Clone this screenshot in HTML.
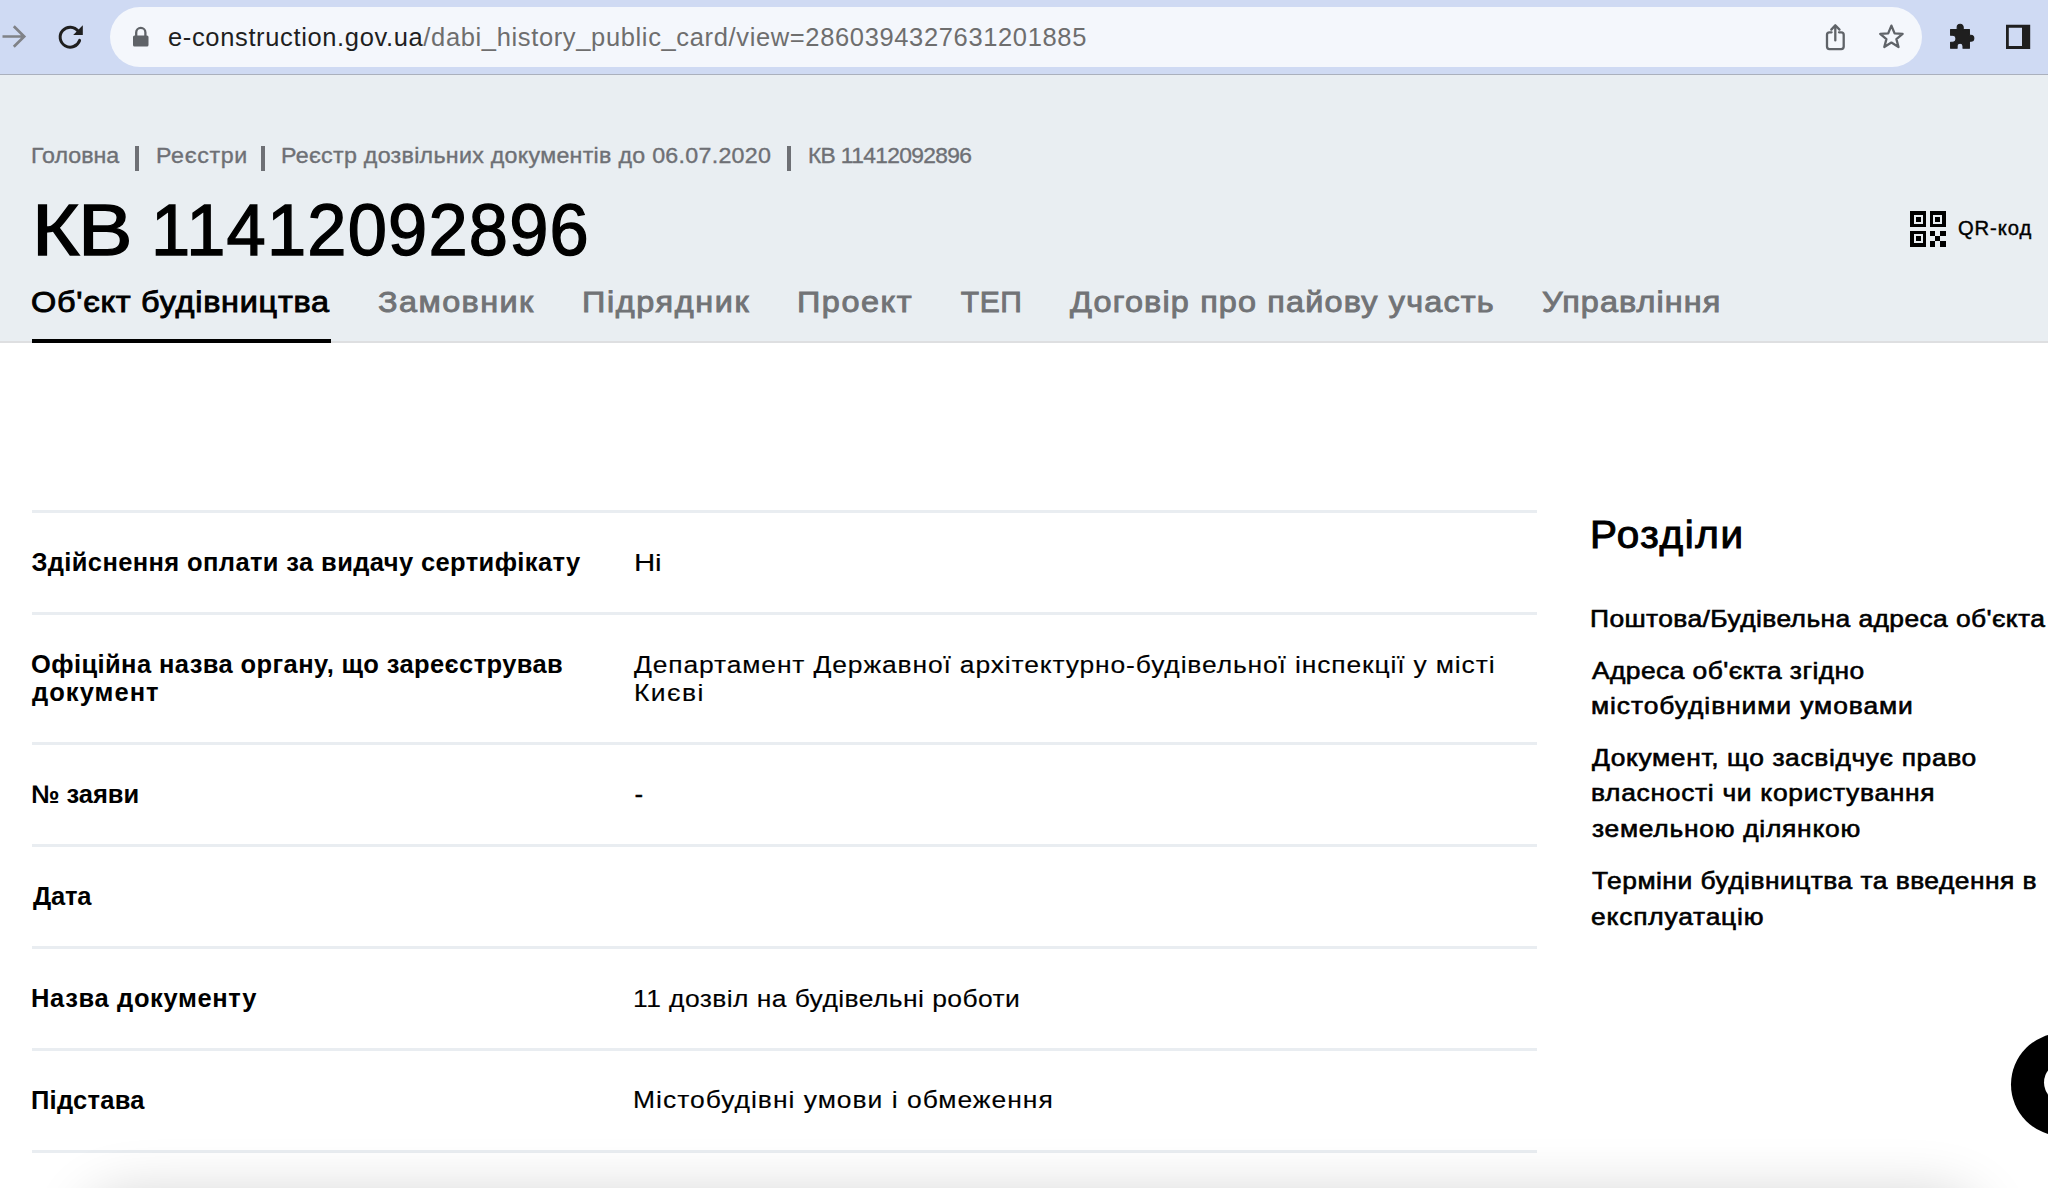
<!DOCTYPE html>
<html><head><meta charset="utf-8"><style>
html,body{margin:0;padding:0;width:2048px;height:1188px;overflow:hidden;background:#fff;}
#w{position:relative;width:2048px;height:1188px;overflow:hidden;font-family:"Liberation Sans",sans-serif;}
.t{position:absolute;white-space:nowrap;}
.r{position:absolute;}
</style></head><body><div id="w">
<div class="r" style="left:0;top:0;width:2048px;height:74px;background:#cfdaf3"></div>
<div class="r" style="left:0;top:74px;width:2048px;height:1px;background:#aab0bd"></div>
<div class="r" style="left:110px;top:7px;width:1812px;height:60px;border-radius:30px;background:#f4f7fc"></div>
<svg class="r" style="left:0;top:0" width="2048" height="74" viewBox="0 0 2048 74">
<g fill="none" stroke="#808287" stroke-width="2.7" stroke-linecap="butt" stroke-linejoin="miter">
<path d="M2.5 36.5 H24 M13.8 26.2 L24.2 36.5 L13.8 46.8"/></g>
<g fill="none" stroke="#1f1f1f" stroke-width="3">
<path d="M79.6 40.4 A10 10 0 1 1 78.2 31.2" stroke-linecap="round"/></g>
<path d="M82.8 25.3 L82.8 34.9 L73.2 34.9 Z" fill="#1f1f1f"/>
<g fill="#5f6368"><rect x="133" y="35.5" width="15.5" height="11" rx="1.5"/></g>
<path d="M136.2 36 V32.5 A4.6 4.6 0 0 1 145.4 32.5 V36" fill="none" stroke="#5f6368" stroke-width="2.3"/>
<g fill="none" stroke="#5f6368" stroke-width="2.3" stroke-linecap="round" stroke-linejoin="round">
<path d="M1831.6 32.3 H1829.5 Q1827 32.3 1827 34.8 V46.6 Q1827 49.1 1829.5 49.1 H1841.2 Q1843.7 49.1 1843.7 46.6 V34.8 Q1843.7 32.3 1841.2 32.3 H1839"/>
<path d="M1835.3 40.4 V25.5 M1831.3 29.6 L1835.3 25.3 L1839.5 29.6"/>
<path d="M1891.4 25.6 L1894.6 33.4 L1902.6 33.9 L1896.4 39.1 L1898.5 47 L1891.4 42.6 L1884.3 47 L1886.4 39.1 L1880.2 33.9 L1888.2 33.4 Z"/>
</g>
<path fill="#1f1f1f" stroke="#1f1f1f" stroke-width="1.2" stroke-linejoin="round" transform="translate(1960 38.9) scale(0.94) translate(-1960 -38.9)" d="M1950 29 H1957 V26.5 A3.2 3.2 0 0 1 1963.4 26.5 V29 H1970 V35 H1971.5 A3.2 3.2 0 0 1 1971.5 41.4 H1970 V48.8 H1963.2 V46.5 A3.15 3.15 0 0 0 1956.9 46.5 V48.8 H1950 V42.4 H1952 A3.7 3.7 0 0 0 1952 35 H1950 Z"/>
<path fill="#1f1f1f" fill-rule="evenodd" d="M2006 24.8 H2030.2 V49 H2006 Z M2008.8 27.7 V46.1 H2022 V27.7 Z"/>
</svg>
<div class="t" style="left:168px;top:20.66px;font-size:25.5px;line-height:32px;color:#1f1f1f;letter-spacing:0.64px">e-construction.gov.ua<span style="color:#6e6e6e">/dabi_history_public_card/view=2860394327631201885</span></div>
<div class="r" style="left:0;top:75px;width:2048px;height:266px;background:#e9eef2"></div>
<div class="r" style="left:0;top:341px;width:2048px;height:2px;background:#dedfe1"></div>
<div class="r" style="left:135px;top:146px;width:4px;height:25px;background:#6e7075"></div>
<div class="r" style="left:261px;top:146px;width:4px;height:25px;background:#6e7075"></div>
<div class="r" style="left:787px;top:146px;width:4px;height:25px;background:#6e7075"></div>
<svg class="r" style="left:1910px;top:211px" width="36" height="36" viewBox="0 0 36 36" shape-rendering="crispEdges">
<g fill="#000">
<path fill-rule="evenodd" d="M0 0H16V16H0Z M3.5 3.5V12.5H12.5V3.5Z"/><rect x="5.5" y="5.5" width="5" height="5"/>
<path fill-rule="evenodd" d="M19.5 0H35.5V16H19.5Z M23 3.5V12.5H32V3.5Z"/><rect x="25" y="5.5" width="5" height="5"/>
<path fill-rule="evenodd" d="M0 19.5H16V35.5H0Z M3.5 23V32H12.5V23Z"/><rect x="5.5" y="25" width="5" height="5"/>
<rect x="19.5" y="19.5" width="5.3" height="5.3"/><rect x="30.2" y="19.5" width="5.3" height="5.3"/>
<rect x="24.8" y="24.8" width="5.4" height="5.4"/>
<rect x="19.5" y="30.2" width="5.3" height="5.3"/><rect x="30.2" y="30.2" width="5.3" height="5.3"/>
</g></svg>
<div class="r" style="left:32px;top:339px;width:299px;height:4px;background:#000"></div>
<div class="r" style="left:32px;top:510px;width:1505px;height:3px;background:#e9edf1"></div>
<div class="r" style="left:32px;top:612px;width:1505px;height:3px;background:#e9edf1"></div>
<div class="r" style="left:32px;top:742px;width:1505px;height:3px;background:#e9edf1"></div>
<div class="r" style="left:32px;top:844px;width:1505px;height:3px;background:#e9edf1"></div>
<div class="r" style="left:32px;top:946px;width:1505px;height:3px;background:#e9edf1"></div>
<div class="r" style="left:32px;top:1048px;width:1505px;height:3px;background:#e9edf1"></div>
<div class="r" style="left:32px;top:1150px;width:1505px;height:3px;background:#e9edf1"></div>
<div class="t" style="left:31.00px;top:143.85px;font-size:21.5px;line-height:25.8px;font-weight:400;color:#6e7075;letter-spacing:0.000px;-webkit-text-stroke:0.35px #6e7075;transform:scaleX(1.08);transform-origin:0 0;">Головна</div>
<div class="t" style="left:155.50px;top:143.85px;font-size:21.5px;line-height:25.8px;font-weight:400;color:#6e7075;letter-spacing:0.602px;-webkit-text-stroke:0.35px #6e7075;transform:scaleX(1.08);transform-origin:0 0;">Реєстри</div>
<div class="t" style="left:281.40px;top:143.85px;font-size:21.5px;line-height:25.8px;font-weight:400;color:#6e7075;letter-spacing:0.262px;-webkit-text-stroke:0.35px #6e7075;transform:scaleX(1.08);transform-origin:0 0;">Реєстр дозвільних документів до 06.07.2020</div>
<div class="t" style="left:808.00px;top:143.85px;font-size:21.5px;line-height:25.8px;font-weight:400;color:#6e7075;letter-spacing:-0.617px;-webkit-text-stroke:0.35px #6e7075;transform:scaleX(1.06);transform-origin:0 0;">КВ 11412092896</div>
<div class="t" style="left:32.20px;top:185.91px;font-size:73px;line-height:87.6px;font-weight:400;color:#000;letter-spacing:-1.518px;-webkit-text-stroke:1.4px #000;transform:scaleX(1.12);transform-origin:0 0;">КВ</div>
<div class="t" style="left:150.50px;top:185.91px;font-size:73px;line-height:87.6px;font-weight:400;color:#000;letter-spacing:1.244px;-webkit-text-stroke:1.4px #000;transform:scaleX(0.965);transform-origin:0 0;">11412092896</div>
<div class="t" style="left:1957.80px;top:216.55px;font-size:19.6px;line-height:23.52px;font-weight:400;color:#000;letter-spacing:0.893px;-webkit-text-stroke:0.4px #000;transform:scaleX(1.03);transform-origin:0 0;">QR-код</div>
<div class="t" style="left:31.30px;top:283.50px;font-size:30px;line-height:36.0px;font-weight:400;color:#000;letter-spacing:0.692px;-webkit-text-stroke:0.9px #000;transform:scaleX(1.08);transform-origin:0 0;">Об'єкт будівництва</div>
<div class="t" style="left:378.00px;top:283.50px;font-size:30px;line-height:36.0px;font-weight:400;color:#717376;letter-spacing:1.323px;-webkit-text-stroke:0.9px #717376;transform:scaleX(1.08);transform-origin:0 0;">Замовник</div>
<div class="t" style="left:582.00px;top:283.50px;font-size:30px;line-height:36.0px;font-weight:400;color:#717376;letter-spacing:1.505px;-webkit-text-stroke:0.9px #717376;transform:scaleX(1.08);transform-origin:0 0;">Підрядник</div>
<div class="t" style="left:796.80px;top:283.50px;font-size:30px;line-height:36.0px;font-weight:400;color:#717376;letter-spacing:1.444px;-webkit-text-stroke:0.9px #717376;transform:scaleX(1.08);transform-origin:0 0;">Проект</div>
<div class="t" style="left:960.80px;top:283.50px;font-size:30px;line-height:36.0px;font-weight:400;color:#717376;letter-spacing:0.600px;-webkit-text-stroke:0.9px #717376;transform:scaleX(1.0);transform-origin:0 0;">ТЕП</div>
<div class="t" style="left:1070.40px;top:283.50px;font-size:30px;line-height:36.0px;font-weight:400;color:#717376;letter-spacing:1.073px;-webkit-text-stroke:0.9px #717376;transform:scaleX(1.08);transform-origin:0 0;">Договір про пайову участь</div>
<div class="t" style="left:1542.30px;top:283.50px;font-size:30px;line-height:36.0px;font-weight:400;color:#717376;letter-spacing:0.998px;-webkit-text-stroke:0.9px #717376;transform:scaleX(1.08);transform-origin:0 0;">Управління</div>
<div class="t" style="left:31.40px;top:547.36px;font-size:25.5px;line-height:30.6px;font-weight:700;color:#000;letter-spacing:0.384px;transform:scaleX(1.0);transform-origin:0 0;">Здійснення оплати за видачу сертифікату</div>
<div class="t" style="left:31.00px;top:649.16px;font-size:25.5px;line-height:30.6px;font-weight:700;color:#000;letter-spacing:0.405px;transform:scaleX(1.0);transform-origin:0 0;">Офіційна назва органу, що зареєстрував</div>
<div class="t" style="left:32.00px;top:677.06px;font-size:25.5px;line-height:30.6px;font-weight:700;color:#000;letter-spacing:1.043px;transform:scaleX(1.0);transform-origin:0 0;">документ</div>
<div class="t" style="left:31.00px;top:779.36px;font-size:25.5px;line-height:30.6px;font-weight:700;color:#000;letter-spacing:-0.033px;transform:scaleX(1.0);transform-origin:0 0;">№ заяви</div>
<div class="t" style="left:33.00px;top:881.16px;font-size:25.5px;line-height:30.6px;font-weight:700;color:#000;letter-spacing:-0.167px;transform:scaleX(1.0);transform-origin:0 0;">Дата</div>
<div class="t" style="left:31.00px;top:983.06px;font-size:25.5px;line-height:30.6px;font-weight:700;color:#000;letter-spacing:0.643px;transform:scaleX(1.0);transform-origin:0 0;">Назва документу</div>
<div class="t" style="left:31.00px;top:1084.86px;font-size:25.5px;line-height:30.6px;font-weight:700;color:#000;letter-spacing:0.257px;transform:scaleX(1.0);transform-origin:0 0;">Підстава</div>
<div class="t" style="left:633.70px;top:548.31px;font-size:24.5px;line-height:29.4px;font-weight:400;color:#000;letter-spacing:-0.167px;-webkit-text-stroke:0.15px #000;transform:scaleX(1.2);transform-origin:0 0;">Ні</div>
<div class="t" style="left:634.40px;top:649.81px;font-size:24.5px;line-height:29.4px;font-weight:400;color:#000;letter-spacing:0.785px;-webkit-text-stroke:0.15px #000;transform:scaleX(1.08);transform-origin:0 0;">Департамент Державної архітектурно-будівельної інспекції у місті</div>
<div class="t" style="left:634.30px;top:677.81px;font-size:24.5px;line-height:29.4px;font-weight:400;color:#000;letter-spacing:1.319px;-webkit-text-stroke:0.15px #000;transform:scaleX(1.08);transform-origin:0 0;">Києві</div>
<div class="t" style="left:634.80px;top:778.81px;font-size:24.5px;line-height:29.4px;font-weight:400;color:#000;letter-spacing:0.000px;-webkit-text-stroke:0.6px #000;transform:scaleX(1.0);transform-origin:0 0;">-</div>
<div class="t" style="left:632.50px;top:983.81px;font-size:24.5px;line-height:29.4px;font-weight:400;color:#000;letter-spacing:0.386px;-webkit-text-stroke:0.15px #000;transform:scaleX(1.08);transform-origin:0 0;">11 дозвіл на будівельні роботи</div>
<div class="t" style="left:633.00px;top:1085.31px;font-size:24.5px;line-height:29.4px;font-weight:400;color:#000;letter-spacing:0.920px;-webkit-text-stroke:0.15px #000;transform:scaleX(1.08);transform-origin:0 0;">Містобудівні умови і обмеження</div>
<div class="t" style="left:1589.60px;top:511.96px;font-size:38.5px;line-height:46.2px;font-weight:400;color:#000;letter-spacing:1.492px;-webkit-text-stroke:1.0px #000;transform:scaleX(1.05);transform-origin:0 0;">Розділи</div>
<div class="t" style="left:1590.00px;top:604.58px;font-size:24px;line-height:28.8px;font-weight:400;color:#000;letter-spacing:0.369px;-webkit-text-stroke:0.6px #000;transform:scaleX(1.1);transform-origin:0 0;">Поштова/Будівельна адреса об'єкта</div>
<div class="t" style="left:1592.00px;top:656.98px;font-size:24px;line-height:28.8px;font-weight:400;color:#000;letter-spacing:0.382px;-webkit-text-stroke:0.6px #000;transform:scaleX(1.1);transform-origin:0 0;">Адреса об'єкта згідно</div>
<div class="t" style="left:1591.00px;top:692.08px;font-size:24px;line-height:28.8px;font-weight:400;color:#000;letter-spacing:0.840px;-webkit-text-stroke:0.6px #000;transform:scaleX(1.1);transform-origin:0 0;">містобудівними умовами</div>
<div class="t" style="left:1592.00px;top:743.88px;font-size:24px;line-height:28.8px;font-weight:400;color:#000;letter-spacing:0.566px;-webkit-text-stroke:0.6px #000;transform:scaleX(1.1);transform-origin:0 0;">Документ, що засвідчує право</div>
<div class="t" style="left:1591.00px;top:779.28px;font-size:24px;line-height:28.8px;font-weight:400;color:#000;letter-spacing:0.633px;-webkit-text-stroke:0.6px #000;transform:scaleX(1.1);transform-origin:0 0;">власності чи користування</div>
<div class="t" style="left:1592.00px;top:814.68px;font-size:24px;line-height:28.8px;font-weight:400;color:#000;letter-spacing:0.658px;-webkit-text-stroke:0.6px #000;transform:scaleX(1.1);transform-origin:0 0;">земельною ділянкою</div>
<div class="t" style="left:1592.00px;top:867.28px;font-size:24px;line-height:28.8px;font-weight:400;color:#000;letter-spacing:0.423px;-webkit-text-stroke:0.6px #000;transform:scaleX(1.1);transform-origin:0 0;">Терміни будівництва та введення в</div>
<div class="t" style="left:1591.00px;top:902.68px;font-size:24px;line-height:28.8px;font-weight:400;color:#000;letter-spacing:0.727px;-webkit-text-stroke:0.6px #000;transform:scaleX(1.1);transform-origin:0 0;">експлуатацію</div>
<div class="r" style="left:2010.5px;top:1032.5px;width:103px;height:103px;border-radius:50%;background:#000"></div>
<div class="r" style="left:2043.6px;top:1063px;width:38px;height:39px;border-radius:50%;background:#fff"></div>
<div class="r" style="left:95px;top:1205px;width:1875px;height:100px;border-radius:30px;background:#ddd;box-shadow:0 0 60px 8px rgba(0,0,0,0.2)"></div>
</div></body></html>
